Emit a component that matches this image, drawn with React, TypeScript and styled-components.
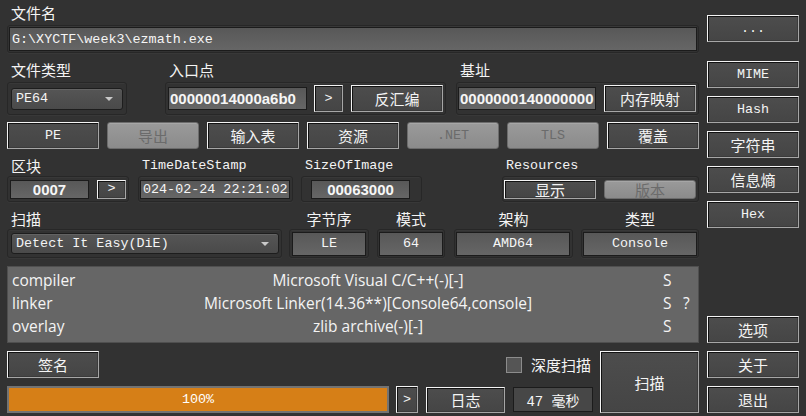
import React from "react"
import styled, { createGlobalStyle, css } from "styled-components"

const CJK = `"Noto Sans CJK SC", "Noto Sans", sans-serif`
const MONO = `"Liberation Mono", "Noto Sans CJK SC", monospace`
const BOLD = `"Liberation Sans", Arial, sans-serif`

const GlobalStyle = createGlobalStyle`
  html, body { margin: 0; padding: 0; background: #323232; }
  body { font-family: ${CJK}; color: #f2f2f2; }
  * { box-sizing: border-box; }
`

const Window = styled.div`
  display: flex;
  width: 806px;
  height: 416px;
  padding: 0 7px;
  background: #323232;
  overflow: hidden;
`

const Main = styled.div`
  width: 692px;
  display: flex;
  flex-direction: column;
  padding-top: 3px;
`

const Side = styled.div`
  width: 92px;
  margin-left: 8px;
  display: flex;
  flex-direction: column;
  gap: 8px;
  padding: 15px 0 3px;
`

const SideGap = styled.div<{ $h?: number }>`
  ${p => p.$h ? css`height: ${p.$h}px;` : css`flex: 1;`}
`

const Row = styled.div<{ $mt?: number; $gap?: number }>`
  display: flex;
  align-items: flex-start;
  margin-top: ${p => p.$mt ?? 0}px;
  gap: ${p => p.$gap ?? 0}px;
`

const Group = styled.div<{ $w: number; $ml?: number }>`
  display: flex;
  flex-direction: column;
  width: ${p => p.$w}px;
  margin-left: ${p => p.$ml ?? 0}px;
  flex: none;
`

const Label = styled.div<{ $lh?: number; $mono?: boolean; $center?: boolean }>`
  height: 22px;
  line-height: ${p => p.$lh ?? 20}px;
  padding-left: ${p => p.$center ? 0 : 4}px;
  text-align: ${p => p.$center ? "center" : "left"};
  font-family: ${p => p.$mono ? MONO : CJK};
  font-size: ${p => p.$mono ? 13.4 : 15}px;
  color: #f4f4f4;
  white-space: nowrap;
`

const Frame = styled.div<{ $h: number; $pad?: number; $gap?: number }>`
  display: flex;
  align-items: center;
  height: ${p => p.$h}px;
  padding: 0 ${p => p.$pad ?? 1}px;
  gap: ${p => p.$gap ?? 0}px;
  border: 1px solid #272727;
  border-radius: 3px;
  box-shadow: 0 1px 0 #383838, inset 0 1px 0 #383838;
`

const Field = styled.div<{ $w?: number; $h: number; $bold?: boolean; $center?: boolean; $dark?: boolean }>`
  width: ${p => p.$w ? `${p.$w}px` : "100%"};
  height: ${p => p.$h}px;
  flex: none;
  display: flex;
  align-items: center;
  justify-content: ${p => p.$center ? "center" : "flex-start"};
  padding: 0 ${p => p.$bold ? 1 : 2}px;
  border: 1px solid #1b1b1b;
  background: ${p => p.$dark ? "#474747" : "linear-gradient(#585858, #666666)"};
  overflow: hidden;
  white-space: nowrap;
  color: #f6f6f6;
  font-family: ${p => p.$bold ? BOLD : MONO};
  font-weight: ${p => p.$bold ? 700 : 400};
  font-size: ${p => p.$bold ? 15 : 13.4}px;
`

const Combo = styled.div<{ $w: number; $h: number }>`
  position: relative;
  width: ${p => p.$w}px;
  height: ${p => p.$h}px;
  flex: none;
  display: flex;
  align-items: center;
  padding-left: 4px;
  border: 1px solid #1d1d1d;
  border-radius: 3px;
  background: linear-gradient(#555555, #4a4a4a);
  box-shadow: inset 0 1px 0 #636363;
  font-family: ${MONO};
  font-size: 13.4px;
  color: #f4f4f4;

  &::after {
    content: "";
    position: absolute;
    right: 9px;
    top: 50%;
    margin-top: -2px;
    border-left: 4.5px solid transparent;
    border-right: 4.5px solid transparent;
    border-top: 4px solid #c9c9c9;
  }
`

const Btn = styled.button<{ $w?: number; $h?: number; $mono?: boolean; $off?: boolean; $ml?: number }>`
  width: ${p => p.$w ? `${p.$w}px` : "100%"};
  height: ${p => p.$h ?? 27}px;
  margin-left: ${p => p.$ml ?? 0}px;
  flex: none;
  padding: 0;
  display: flex;
  align-items: center;
  justify-content: center;
  font-family: ${p => p.$mono ? MONO : CJK};
  font-size: ${p => p.$mono ? 13.4 : 15}px;
  line-height: 1;
  border: 1px solid;
  border-color: #f4f4f4 #a6a6a6 #a6a6a6 #f4f4f4;
  box-shadow: inset 1px 1px 0 #121212, inset -1px -1px 0 #3a3a3a;
  background: linear-gradient(#4d4d4d, #454545);
  color: #f4f4f4;

  ${p => p.$off && css`
    border: 1px solid #6c6c6c;
    border-radius: 3px;
    box-shadow: inset 0 1px 0 #a6a6a6;
    background: linear-gradient(#9a9a9a, #8b8b8b);
    color: #6b6b6b;
  `}
`

const Results = styled.div`
  height: 77px;
  margin-top: 8px;
  padding-top: 1px;
  background: #666666;
  border: 1px solid #4f4f4f;
  font-family: "Open Sans", "Noto Sans", sans-serif;
  font-size: 15.5px;
  color: #f4f4f4;
`

const ResultRow = styled.div`
  display: grid;
  grid-template-columns: 82px 548px 41px 20px;
  height: 23px;
  align-items: center;
  padding-left: 4px;
  white-space: nowrap;
`

const Name = styled.span`
  text-align: center;
`

const Flag = styled.span<{ $pl?: number }>`
  padding-left: ${p => p.$pl ?? 0}px;
`

const Bottom = styled.div`
  display: flex;
  margin-top: 8px;
  height: 62px;
`

const BottomLeft = styled.div`
  width: 586px;
  display: flex;
  flex-direction: column;
  gap: 8px;
`

const BottomRow = styled.div`
  display: flex;
  align-items: center;
  height: 27px;
`

const Deep = styled.label`
  margin-left: auto;
  margin-right: 2px;
  display: flex;
  align-items: center;
  gap: 9px;
  font-family: ${CJK};
  font-size: 15px;
  color: #f4f4f4;
`

const Check = styled.span`
  width: 16px;
  height: 16px;
  border: 1px solid #8c8c8c;
  background: #555555;
`

const Progress = styled.div`
  width: 382px;
  height: 27px;
  display: flex;
  align-items: center;
  justify-content: center;
  border: 2px solid #737373;
  background: #d67f17;
  font-family: ${MONO};
  font-size: 13.4px;
  color: #ffffff;
`

const Timer = styled(Field)`
  margin-left: 8px;
  font-family: ${MONO};
  font-size: 14px;
`

const rows = [
  { type: "compiler", name: "Microsoft Visual C/C++(-)[-]", s: "S", q: "" },
  { type: "linker", name: "Microsoft Linker(14.36**)[Console64,console]", s: "S", q: "?" },
  { type: "overlay", name: "zlib archive(-)[-]", s: "S", q: "" },
]

const tabs = [
  { t: "PE", mono: true },
  { t: "导出", off: true },
  { t: "输入表" },
  { t: "资源" },
  { t: ".NET", mono: true, off: true },
  { t: "TLS", mono: true, off: true },
  { t: "覆盖" },
]

export default function App() {
  return (
    <>
      <GlobalStyle />
      <Window>
        <Main>
          <Label>文件名</Label>
          <Frame $h={28} $pad={1}>
            <Field $h={24}>G:\XYCTF\week3\ezmath.exe</Field>
          </Frame>

          <Row $mt={7}>
            <Group $w={120}>
              <Label>文件类型</Label>
              <Frame $h={33} $pad={3}>
                <Combo $w={112} $h={22}>PE64</Combo>
              </Frame>
            </Group>
            <Group $w={281} $ml={38}>
              <Label>入口点</Label>
              <Frame $h={33} $pad={2}>
                <Field $w={139} $h={23} $bold>00000014000a6b0</Field>
                <Btn $w={29} $h={27} $mono $ml={7}>&gt;</Btn>
                <Btn $w={92} $h={27} $ml={8}>反汇编</Btn>
              </Frame>
            </Group>
            <Group $w={243} $ml={10}>
              <Label>基址</Label>
              <Frame $h={33} $pad={1}>
                <Field $w={138} $h={23} $bold>0000000140000000</Field>
                <Btn $w={92} $h={27} $ml={8}>内存映射</Btn>
              </Frame>
            </Group>
          </Row>

          <Row $mt={7} $gap={8}>
            {tabs.map(b => (
              <Btn key={b.t} $w={92} $mono={b.mono} $off={b.off}>{b.t}</Btn>
            ))}
          </Row>

          <Row $mt={5}>
            <Group $w={122}>
              <Label $lh={24}>区块</Label>
              <Frame $h={26} $pad={2}>
                <Field $w={79} $h={19} $bold $center>0007</Field>
                <Btn $w={29} $h={19} $mono $ml={8}>&gt;</Btn>
              </Frame>
            </Group>
            <Group $w={155} $ml={9}>
              <Label $lh={24} $mono>TimeDateStamp</Label>
              <Frame $h={26} $pad={1}>
                <Field $w={150} $h={19}>024-02-24 22:21:02</Field>
              </Frame>
            </Group>
            <Group $w={121} $ml={8}>
              <Label $lh={24} $mono>SizeOfImage</Label>
              <Frame $h={26} $pad={9}>
                <Field $w={99} $h={19} $bold $center>00063000</Field>
              </Frame>
            </Group>
            <Group $w={197} $ml={80}>
              <Label $lh={24} $mono>Resources</Label>
              <Frame $h={26} $pad={1}>
                <Btn $w={92} $h={19}>显示</Btn>
                <Btn $w={92} $h={19} $off $ml={8}>版本</Btn>
              </Frame>
            </Group>
          </Row>

          <Row $mt={5}>
            <Group $w={275}>
              <Label $lh={23}>扫描</Label>
              <Frame $h={29} $pad={3}>
                <Combo $w={268} $h={21}>Detect It Easy(DiE)</Combo>
              </Frame>
            </Group>
            <Group $w={80} $ml={7}>
              <Label $lh={23} $center>字节序</Label>
              <Frame $h={29} $pad={2}>
                <Field $w={74} $h={24} $center>LE</Field>
              </Frame>
            </Group>
            <Group $w={68} $ml={8}>
              <Label $lh={23} $center>模式</Label>
              <Frame $h={29} $pad={1}>
                <Field $w={64} $h={24} $center>64</Field>
              </Frame>
            </Group>
            <Group $w={119} $ml={9}>
              <Label $lh={23} $center>架构</Label>
              <Frame $h={29} $pad={1}>
                <Field $w={114} $h={24} $center>AMD64</Field>
              </Frame>
            </Group>
            <Group $w={118} $ml={8}>
              <Label $lh={23} $center>类型</Label>
              <Frame $h={29} $pad={1}>
                <Field $w={114} $h={24} $center>Console</Field>
              </Frame>
            </Group>
          </Row>

          <Results>
            {rows.map(r => (
              <ResultRow key={r.type}>
                <span>{r.type}</span>
                <Name>{r.name}</Name>
                <Flag $pl={21}>{r.s}</Flag>
                <Flag>{r.q}</Flag>
              </ResultRow>
            ))}
          </Results>

          <Bottom>
            <BottomLeft>
              <BottomRow>
                <Btn $w={92}>签名</Btn>
                <Deep>
                  <Check />
                  深度扫描
                </Deep>
              </BottomRow>
              <BottomRow>
                <Progress>100%</Progress>
                <Btn $w={22} $mono $ml={7}>&gt;</Btn>
                <Btn $w={79} $h={26} $ml={8}>日志</Btn>
                <Timer $w={80} $h={25} $center $dark>47 毫秒</Timer>
              </BottomRow>
            </BottomLeft>
            <Btn $w={99} $h={62} $ml={7}>扫描</Btn>
          </Bottom>
        </Main>

        <Side>
          <Btn $mono>...</Btn>
          <SideGap $h={3} />
          <Btn $mono>MIME</Btn>
          <Btn $mono>Hash</Btn>
          <Btn>字符串</Btn>
          <Btn>信息熵</Btn>
          <Btn $mono>Hex</Btn>
          <SideGap />
          <Btn>选项</Btn>
          <Btn>关于</Btn>
          <Btn>退出</Btn>
        </Side>
      </Window>
    </>
  )
}
